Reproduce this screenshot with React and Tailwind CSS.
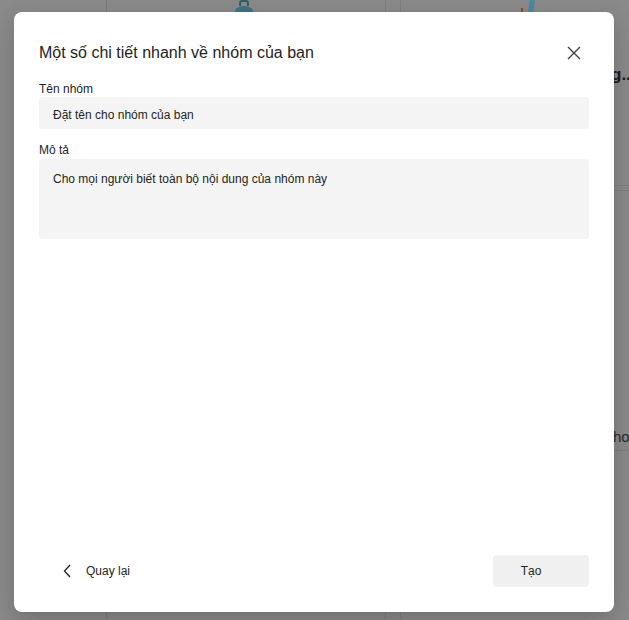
import React from "react";

export default function App() {
  return (
    <div
      className="relative w-[629px] h-[620px] overflow-hidden bg-[#8a8a8a]"
      style={{ fontFamily: '"Liberation Sans", Arial, sans-serif' }}
    >
      {/* dimmed background page */}
      <div className="absolute inset-0 pointer-events-none">
        <div className="absolute left-[106px] top-0 h-full w-px bg-[#7a7a7a]" />
        <div className="absolute left-[385px] top-0 h-full w-px bg-[#7e7e7e]" />
        <div className="absolute left-[400px] top-0 h-full w-px bg-[#7e7e7e]" />
        <div className="absolute left-[600px] top-[185px] w-[29px] h-px bg-[#7e7e7e]" />
        <div className="absolute left-[600px] top-[190px] w-[29px] h-px bg-[#7e7e7e]" />
        <div className="absolute left-[600px] top-[450px] w-[29px] h-px bg-[#7e7e7e]" />
        <svg className="absolute left-[233px] top-0" width="22" height="12" viewBox="0 0 22 12">
          <path d="M7 6 V3 Q7 1 9 1 H13 Q15 1 15 3 V6" fill="none" stroke="#2e5d6a" strokeWidth="2" />
          <ellipse cx="11" cy="14" rx="10" ry="8" fill="#3f7281" />
        </svg>
        <svg className="absolute left-[520px] top-0" width="20" height="12" viewBox="0 0 20 12">
          <rect x="1" y="8" width="2" height="4" fill="#8a4a4a" />
          <rect x="4" y="6" width="2" height="6" fill="#a08a50" />
          <rect x="9" y="0" width="5" height="12" fill="#4a88a8" transform="rotate(10 11 6)" />
        </svg>
        <div className="absolute left-[611px] top-[66px] text-[17px] font-bold text-[#1a1a1a] leading-none whitespace-nowrap">g...</div>
        <div className="absolute left-[613px] top-[429px] text-[15px] text-[#2a2a2a] leading-none whitespace-nowrap">ho</div>
      </div>

      {/* dialog */}
      <div className="relative pl-[14px] pt-[12px]">
        <div className="w-[600px] h-[600px] bg-white rounded-[8px] shadow-[0_8px_24px_rgba(0,0,0,0.2)] flex flex-col px-[25px] pt-[29px] pb-[25px] text-[#242424]">
          <div className="flex items-center justify-between h-[24px]">
            <h2 className="text-[16px] leading-[24px] font-normal">Một số chi tiết nhanh về nhóm của bạn</h2>
            <button className="w-[32px] h-[32px] flex items-center justify-center mr-[-1px]">
              <svg width="16" height="16" viewBox="0 0 16 16">
                <path d="M2 2 L14 14 M14 2 L2 14" stroke="#424242" strokeWidth="1.4" fill="none" />
              </svg>
            </button>
          </div>

          <label className="mt-[16px] text-[12px] leading-[16px]">Tên nhóm</label>
          <div className="h-[32px] w-[550px] bg-[#f4f4f4] rounded-[4px] flex items-center px-[14px] pt-[4px] text-[12px]">
            Đặt tên cho nhóm của bạn
          </div>

          <label className="mt-[13px] text-[12px] leading-[16px]">Mô tả</label>
          <div className="mt-[1px] h-[80px] w-[550px] bg-[#f4f4f4] rounded-[4px] px-[14px] pt-[12px] text-[12px] leading-[16px]">
            Cho mọi người biết toàn bộ nội dung của nhóm này
          </div>

          <div className="mt-auto flex items-center justify-between">
            <button className="flex items-center h-[32px] pl-[23px] text-[12px]">
              <svg width="12" height="16" viewBox="0 0 12 16">
                <path d="M8 2 L2.5 8 L8 14" stroke="#242424" strokeWidth="1.3" fill="none" />
              </svg>
              <span className="ml-[12px]">Quay lại</span>
            </button>
            <button className="w-[96px] h-[32px] bg-[#f0f0f0] rounded-[4px] text-[12px] flex items-center justify-center pr-[20px]">
              Tạo
            </button>
          </div>
        </div>
      </div>
    </div>
  );
}
